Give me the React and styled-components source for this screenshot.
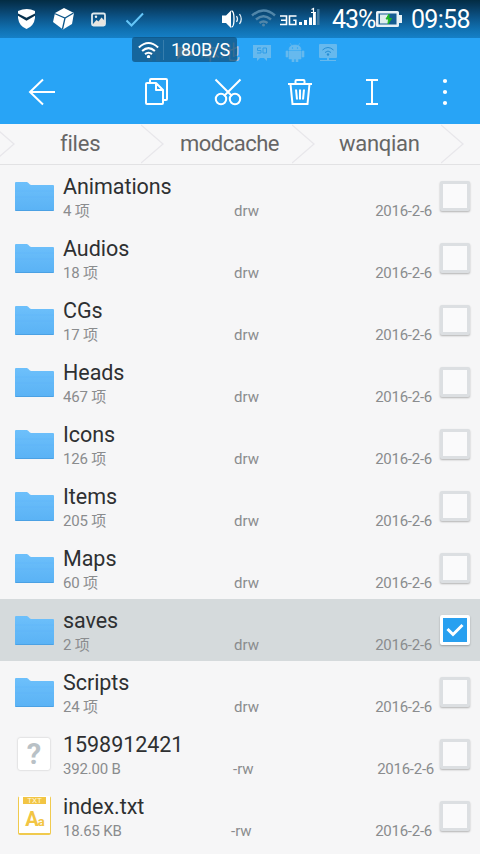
import React from "react";
import styled, { createGlobalStyle } from "styled-components";

const Global = createGlobalStyle`
  * { box-sizing: border-box; }
  html, body { margin: 0; padding: 0; background: #f6f6f7; overflow: hidden; }
  svg { display: block; flex: none; }
`;

const Screen = styled.div`
  width: 480px;
  height: 854px;
  overflow: hidden;
  display: flex;
  flex-direction: column;
  background: #f6f6f7;
  font-family: Roboto, "Noto Sans CJK SC", sans-serif;
`;

const StatusBar = styled.div`
  height: 38px;
  flex: none;
  display: flex;
  align-items: center;
  justify-content: space-between;
  padding: 0 9px 0 18px;
  background: linear-gradient(#032c43 0, #07385a 6px, #0c5386 17px, #1070b0 29px, #1580c7 38px);
  color: #fff;
`;

const StatusGroup = styled.div`
  display: flex;
  align-items: center;
`;

const Battery = styled.span`
  width: 43px;
  font-size: 25px;
  line-height: 38px;
  letter-spacing: -1.1px;
  padding-top: 1px;
  white-space: nowrap;
`;

const Clock = styled(Battery)`
  width: 60px;
  margin-left: 8px;
  letter-spacing: -0.7px;
`;

const Header = styled.div`
  height: 86px;
  flex: none;
  background: #28a4f6;
`;

const StorageTabs = styled.div`
  position: relative;
  height: 26px;
  display: flex;
  align-items: flex-start;
  padding: 5px 0 0 146px;
`;

const StorageName = styled.span`
  width: 57px;
  padding-left: 6px;
  font-size: 20px;
  line-height: 20px;
  color: rgba(214, 200, 190, 0.75);
  white-space: nowrap;
`;

const SpeedBadge = styled.div`
  position: absolute;
  left: 132px;
  top: -1px;
  width: 105px;
  height: 25px;
  border-radius: 3px;
  background: rgba(13, 75, 119, 0.7);
  display: flex;
  align-items: center;
  padding-left: 6px;
  color: #fff;
  font-size: 18px;
  letter-spacing: -0.1px;
  white-space: nowrap;
`;

const SpeedValue = styled.span`
  margin-left: 4px;
  padding-left: 7px;
  border-left: 1px solid rgba(120, 170, 200, 0.35);
  line-height: 20px;
`;

const Toolbar = styled.div`
  height: 60px;
  display: grid;
  grid-template-columns: 122px 70px 72px 72px 72px 74px;
  align-items: center;
  justify-items: center;
`;

const ToolButton = styled.button`
  border: 0;
  padding: 0;
  background: none;
  color: #fff;
  transform: translateY(-2px);
  ${(p) => p.$back && "justify-self: start; margin-left: 28px;"}
`;

const Breadcrumbs = styled.div`
  height: 41px;
  flex: none;
  display: flex;
  background: #f7f7f8;
  border-bottom: 1px solid #e2e2e4;
`;

const Crumb = styled.div`
  width: ${(p) => p.$width}px;
  display: flex;
  color: #666;
  font-size: 22px;
  line-height: 40px;
  letter-spacing: ${(p) => p.$spacing || 0}px;
`;

const CrumbLabel = styled.span`
  flex: 1;
  padding-left: ${(p) => p.$indent}px;
  white-space: nowrap;
`;

const FileRow = styled.div`
  height: 62px;
  flex: none;
  display: grid;
  grid-template-columns: 48px 1fr 48px;
  padding-left: 15px;
  background: ${(p) => (p.$selected ? "#d5dadc" : "#f6f6f7")};
`;

const IconCell = styled.div`
  padding-top: ${(p) => p.$top}px;
`;

const Details = styled.div`
  padding-top: 8px;
  min-width: 0;
`;

const FileName = styled.div`
  height: 28px;
  font-size: 21.5px;
  line-height: 28px;
  letter-spacing: -0.05px;
  color: #2e3032;
  white-space: nowrap;
`;

const Meta = styled.div`
  display: grid;
  grid-template-columns: ${(p) => p.$permAt}px 1fr auto;
  height: 20px;
  font-size: 15px;
  line-height: 20px;
  color: #8a8c8e;
  white-space: nowrap;
  margin-right: ${(p) => p.$right}px;
`;

const Amount = styled.span`
  letter-spacing: -0.2px;
`;

const DateText = styled.span`
  letter-spacing: -0.25px;
`;

const Cjk = styled.span`
  font-family: "Noto Sans CJK SC", sans-serif;
  font-size: 15px;
  line-height: 18px;
`;

const Checkbox = styled.div`
  width: 30px;
  height: 30px;
  margin: 16px 0 0 8px;
  border: 3px solid ${(p) => (p.$checked ? "#fff" : "#dcdfe2")};
  border-radius: 2px;
  background: ${(p) => (p.$checked ? "#28a0f0" : "#fafafb")};
  box-shadow: 0 1px 2px rgba(0, 0, 0, 0.28);
  display: flex;
  align-items: center;
  justify-content: center;
`;

const UnknownFile = styled.div`
  width: 32px;
  height: 32px;
  margin-left: 3px;
  background: #fff;
  border-radius: 2px;
  box-shadow: 0 0 2px rgba(0, 0, 0, 0.25);
  color: #b9c1c6;
  font-size: 29px;
  font-weight: 700;
  line-height: 32px;
  text-align: center;
`;

const TextFile = styled.div`
  width: 33px;
  height: 39px;
  margin-left: 3px;
  background: #fff;
  border: 1px solid #f0ca4e;
  border-top-color: #fff;
  border-bottom-width: 2px;
  border-radius: 2px;
  display: flex;
  flex-direction: column;
  align-items: center;
  color: #f2c544;
`;

const TextTag = styled.div`
  width: 23px;
  height: 7px;
  background: #f2c544;
  color: #fff7dc;
  font-size: 8px;
  line-height: 7px;
  text-align: center;
`;

const TextGlyphs = styled.div`
  font-size: 20px;
  font-weight: 700;
  line-height: 30px;
  letter-spacing: -1px;
`;

const SmallGlyph = styled.span`
  font-size: 13px;
`;

function Wifi({ width = 23, color = "#fff" }) {
  return (
    <svg width={width} height={width * 0.85} viewBox="0 0 24 20" fill="none" stroke={color} strokeWidth="2.3">
      <path d="M1 7.2Q12-3 23 7.2M4.7 11.2Q12 4.8 19.3 11.2M8 14.8Q12 11.6 16 14.8" />
      <circle cx="12" cy="17.8" r="1.9" fill={color} stroke="none" />
    </svg>
  );
}

function Folder() {
  return (
    <svg width="39" height="30" viewBox="0 0 39 30">
      <defs>
        <linearGradient id="folder" x1="0" y1="0" x2="0" y2="1">
          <stop offset="0" stopColor="#6dc0fb" />
          <stop offset="1" stopColor="#5ab2f5" />
        </linearGradient>
      </defs>
      <path d="M1 0h10.5q1 0 1.700.7l1.400 1.500q.7.8 1.800.8H38q1 0 1 1v24q0 1-1 1H1q-1 0-1-1V1q0-1 1-1z" fill="url(#folder)" />
      <path d="M0 9h39M0 15h39" stroke="#58affa" strokeWidth=".7" opacity=".35" />
      <path d="M.5 28.500h38" stroke="#4ba1e4" strokeWidth="1" />
    </svg>
  );
}

function Chevron() {
  return (
    <svg width="23" height="40" viewBox="0 0 23 40" fill="none" stroke="#e8e7eb" strokeWidth="1.3">
      <path d="M0 1L22 20L0 39" />
    </svg>
  );
}

function StatusIcons() {
  return (
    <svg width="128" height="24" viewBox="0 0 128 24">
      <path d="M0 4q9-4 17 0v7q-1 8-8.500 11Q1 19 0 11z" fill="#fff" />
      <path d="M0 6.500l8.500 4.200L17 6.500v2.200l-8.500 5L0 8.700z" fill="#06304d" />
      <path d="M46 1l10 5-2 11-9 5.500-10-7.500 2-9z" fill="#fff" />
      <path d="M36.500 6.500L47 11l8.500-5M47 11l-2.500 11" stroke="#0c5689" strokeWidth="1.300" fill="none" />
      <rect x="74" y="6.500" width="13" height="12" rx="1.500" fill="none" stroke="#dfe9ee" strokeWidth="1.800" />
      <path d="M75 17l3.500-4 2 1.500 3-4L87 14v4H75z" fill="#e9e5df" />
      <circle cx="78" cy="9.800" r="1.200" fill="#e9eef0" />
      <path d="M108.500 13.500l5 5L125 6.500" stroke="#65c6f8" strokeWidth="2" fill="none" />
    </svg>
  );
}

function SignalIcons() {
  return (
    <svg width="111" height="26" viewBox="0 0 111 26" fill="none">
      <path d="M1 9.500h4l5-5v17.500l-5-5H1z" fill="#fff" />
      <path d="M10.500 5q2.500 0 2.500 8t-2.500 8" stroke="#fff" strokeWidth="1.300" />
      <path d="M15.500 10q2 3 0 6M18.500 8q3.500 5 0 10" stroke="#e4eef5" strokeWidth="1.300" />
      <g stroke="#5186a9" strokeWidth="2.500">
        <path d="M31 9.500q11.500-10 23 0M35 13.500q7.500-6.500 15 0M38.500 17q4-3 8 0" />
        <circle cx="42.500" cy="19" r="1.500" fill="#5186a9" stroke="none" />
      </g>
      <path d="M59 10h6.500v8.500H59M60 14.200h5.500M75.500 10h-7v8.500h6.300v-4.200h-2.500" stroke="#fff" strokeWidth="1.600" />
      <path d="M78 19h3v-3h-3zM83 19h3v-5h-3zM88 19h3v-7.500h-3zM92 19h2.800V7H92z" fill="#fff" />
      <path d="M90.500 3.500l2-1V7M90 6.500h5" stroke="#fff" strokeWidth="1.200" />
      <path d="M96 3h2.500v16H96z" fill="#437ca3" />
    </svg>
  );
}

function BatteryIcon() {
  return (
    <svg width="28" height="18" viewBox="0 0 28 18">
      <path d="M2.500 1h20q1.500 0 1.500 1.500V5h3v8h-3v2.500q0 1.500-1.500 1.500h-20Q1 17 1 15.500v-13Q1 1 2.500 1z" fill="#e7f1f6" />
      <rect x="3.500" y="3.500" width="18" height="11" fill="#155d92" />
      <rect x="5" y="4.500" width="9" height="9" fill="#dfeeed" />
      <path d="M14 4l-3 5h2.500l-.5 5 3.500-5.500h-2.500z" fill="#20b623" stroke="#20b623" />
    </svg>
  );
}

function DeviceIcons() {
  return (
    <svg width="88" height="19" viewBox="0 0 88 19">
      <g fill="#66b9ee">
        <path d="M2 2h18v13h-4v3l-3-3H9l-3 3v-3H2z" />
        <path d="M38 8h12v8h-3v3h-2v-3h-2v3h-2v-3h-3zM35 8h2v6h-2zM51 8h2v6h-2zM38 7q0-5 6-5t6 5zM39 0l2 3M49 0l-2 3" stroke="#66b9ee" strokeWidth=".6" />
        <rect x="68" y="1" width="18" height="14" rx="1" />
        <path d="M76 15h2v2h7v1H69v-1h7z" />
      </g>
      <path d="M10 5H6.500v2.500H10V10H6M12 5v5h3.500V5z" stroke="#2e9de8" strokeWidth="1" fill="none" />
      <circle cx="41.500" cy="5" r=".7" fill="#28a4f6" />
      <circle cx="46.500" cy="5" r=".7" fill="#28a4f6" />
      <path d="M71.500 7q5.500-5 11 0M74 9.500q3-3 6 0" stroke="#258ed5" strokeWidth="1" fill="none" />
      <circle cx="77" cy="11.500" r="1.200" fill="#258ed5" />
    </svg>
  );
}

function LocalIcons() {
  return (
    <svg width="48" height="20" viewBox="0 0 48 20" fill="#69a9cd">
      <path d="M0 10l8-7 8 7h-2v8h-4v-6H6v6H2v-8z" opacity=".6" />
      <path d="M31 4h10v4h6v5H35l-4 4z" fill="#c8c1bc" />
    </svg>
  );
}

const tools = {
  back: (
    <svg width="28" height="28" viewBox="0 0 28 28" fill="none" stroke="#fff" strokeWidth="2">
      <path d="M27 14H2M15 1.500L2 14l13 12.500" />
    </svg>
  ),
  copy: (
    <svg width="26" height="28" viewBox="0 0 26 28" fill="none" stroke="#fff" strokeWidth="2" strokeLinejoin="round">
      <path d="M3 5h9l7 7v13q0 1-1 1H3q-1 0-1-1V6q0-1 1-1zM12 5v7h7M6 5V2q0-1 1-1h15q1 0 1 1v19q0 1-1 1h-3" />
    </svg>
  ),
  cut: (
    <svg width="28" height="28" viewBox="0 0 28 28" fill="none" stroke="#fff" strokeWidth="2">
      <path d="M1.500 1.500L18 18M26.500 1.500L10 18" />
      <circle cx="7" cy="21" r="5.200" />
      <circle cx="21" cy="21" r="5.200" />
    </svg>
  ),
  trash: (
    <svg width="26" height="28" viewBox="0 0 26 28" fill="none" stroke="#fff" strokeWidth="2">
      <path d="M1 6h24M8.500 6V3q0-1 1-1h7q1 0 1 1v3M3.500 6l2 20h15l2-20M9 11.500l1 10M13 11.500v10M17 11.500l-1 10" />
    </svg>
  ),
  rename: (
    <svg width="14" height="28" viewBox="0 0 14 28" fill="none" stroke="#fff" strokeWidth="2">
      <path d="M1 2h12M7 2v24M1 26h12" />
    </svg>
  ),
  more: (
    <svg width="6" height="28" viewBox="0 0 6 28" fill="#fff">
      <circle cx="3" cy="3" r="2.100" />
      <circle cx="3" cy="14" r="2.100" />
      <circle cx="3" cy="25" r="2.100" />
    </svg>
  ),
};

const files = [
  { name: "Animations", count: 4 },
  { name: "Audios", count: 18 },
  { name: "CGs", count: 17 },
  { name: "Heads", count: 467 },
  { name: "Icons", count: 126 },
  { name: "Items", count: 205 },
  { name: "Maps", count: 60 },
  { name: "saves", count: 2, selected: true },
  { name: "Scripts", count: 24 },
  { name: "1598912421", size: "392.00 B", kind: "unknown", permAt: 170, right: -2 },
  { name: "index.txt", size: "18.65 KB", kind: "text", permAt: 168 },
];

function FileIcon({ kind }) {
  if (kind === "unknown") return <UnknownFile>?</UnknownFile>;
  if (kind === "text")
    return (
      <TextFile>
        <TextTag>TXT</TextTag>
        <TextGlyphs>A<SmallGlyph>a</SmallGlyph></TextGlyphs>
      </TextFile>
    );
  return <Folder />;
}

function FileItem({ file }) {
  const iconTop = file.kind === "unknown" ? 15 : file.kind === "text" ? 11 : 17;
  return (
    <FileRow $selected={file.selected}>
      <IconCell $top={iconTop}><FileIcon kind={file.kind} /></IconCell>
      <Details>
        <FileName>{file.name}</FileName>
        <Meta $permAt={file.permAt || 171} $right={file.right || 0}>
          <Amount>{file.size || <>{file.count} <Cjk>项</Cjk></>}</Amount>
          <span>{file.kind ? "-rw" : "drw"}</span>
          <DateText>2016-2-6</DateText>
        </Meta>
      </Details>
      <Checkbox $checked={file.selected}>
        {file.selected && (
          <svg width="20" height="16" viewBox="0 0 20 16" fill="none" stroke="#fff" strokeWidth="3">
            <path d="M2.500 7l5.500 5.500L17.500 3" />
          </svg>
        )}
      </Checkbox>
    </FileRow>
  );
}

export default function App() {
  return (
    <Screen>
      <Global />
      <StatusBar>
        <StatusGroup><StatusIcons /></StatusGroup>
        <StatusGroup>
          <SignalIcons />
          <Battery>43%</Battery>
          <BatteryIcon />
          <Clock>09:58</Clock>
        </StatusGroup>
      </StatusBar>
      <Header>
        <StorageTabs>
          <LocalIcons />
          <StorageName>本地</StorageName>
          <DeviceIcons />
          <SpeedBadge><Wifi width={21} /><SpeedValue>180B/S</SpeedValue></SpeedBadge>
        </StorageTabs>
        <Toolbar>
          <ToolButton $back aria-label="Back">{tools.back}</ToolButton>
          {["copy", "cut", "trash", "rename", "more"].map((name) => (
            <ToolButton key={name} aria-label={name}>{tools[name]}</ToolButton>
          ))}
        </Toolbar>
      </Header>
      <Breadcrumbs>
        <Crumb $width={15}><svg width="15" height="40" viewBox="8 0 15 40" fill="none" stroke="#e8e7eb" strokeWidth="1.3"><path d="M0 1L22 20L0 39" /></svg></Crumb>
        <Crumb $width={149} $spacing={-0.2}><CrumbLabel $indent={45}>files</CrumbLabel><Chevron /></Crumb>
        <Crumb $width={151} $spacing={-0.5}><CrumbLabel $indent={16}>modcache</CrumbLabel><Chevron /></Crumb>
        <Crumb $width={149} $spacing={-0.3}><CrumbLabel $indent={24}>wanqian</CrumbLabel><Chevron /></Crumb>
      </Breadcrumbs>
      {files.map((file) => <FileItem key={file.name} file={file} />)}
    </Screen>
  );
}
